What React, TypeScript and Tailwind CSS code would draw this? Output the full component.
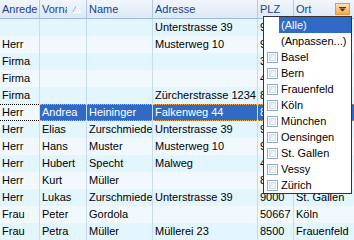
import React from 'react';

// column widths include the 1px right grid line
const columns = [
  { label: 'Anrede', width: 'w-[40px]' },
  { label: 'Vorname', width: 'w-[47px]' },
  { label: 'Name', width: 'w-[66px]' },
  { label: 'Adresse', width: 'w-[105px]' },
  { label: 'PLZ', width: 'w-[36px]' },
  { label: 'Ort', width: 'w-[60px]' },
];

const rows: string[][] = [
  ['', '', '', 'Unterstrasse 39', '9000', 'St. Gallen'],
  ['Herr', '', '', 'Musterweg 10', '9000', 'St. Gallen'],
  ['Firma', '', '', '', '3000', 'Bern'],
  ['Firma', '', '', '', '4500', 'Oensingen'],
  ['Firma', '', '', 'Zürcherstrasse 1234', '8000', 'Zürich'],
  ['Herr', 'Andrea', 'Heininger', 'Falkenweg 44', '8500', 'Frauenfeld'],
  ['Herr', 'Elias', 'Zurschmiede', 'Unterstrasse 39', '9000', 'St. Gallen'],
  ['Herr', 'Hans', 'Muster', 'Musterweg 10', '9000', 'St. Gallen'],
  ['Herr', 'Hubert', 'Specht', 'Malweg', '4500', 'Oensingen'],
  ['Herr', 'Kurt', 'Müller', '', '8000', 'Zürich'],
  ['Herr', 'Lukas', 'Zurschmiede', 'Unterstrasse 39', '9000', 'St. Gallen'],
  ['Frau', 'Peter', 'Gordola', '', '50667', 'Köln'],
  ['Frau', 'Petra', 'Müller', 'Müllerei 23', '8500', 'Frauenfeld'],
];

const SELECTED = 5;

const filterItems = [
  'Basel',
  'Bern',
  'Frauenfeld',
  'Köln',
  'München',
  'Oensingen',
  'St. Gallen',
  'Vessy',
  'Zürich',
];

function SortGlyph() {
  return (
    <svg width="9" height="8" viewBox="0 0 9 8" className="shrink-0">
      <line x1="4.5" y1="0.5" x2="0.5" y2="7.5" stroke="#a3adbd" strokeWidth="1" />
      <line x1="4.5" y1="0.5" x2="8.5" y2="7.5" stroke="#ffffff" strokeWidth="1" />
      <line x1="0.5" y1="7.5" x2="8.5" y2="7.5" stroke="#ffffff" strokeWidth="1" />
    </svg>
  );
}

function FilterButton() {
  return (
    <div className="w-[15px] h-[12px] shrink-0 border border-[#e59a45] bg-gradient-to-b from-[#ffe2b0] to-[#f9a94e] flex items-center justify-center">
      <svg width="7" height="5" viewBox="0 0 7 5">
        <rect x="0" y="0" width="7" height="1" fill="#4a3a2a" />
        <polygon points="0.5,1.5 6.5,1.5 3.5,4.5" fill="#333333" />
      </svg>
    </div>
  );
}

function Checkbox() {
  return (
    <div className="w-[11px] h-[11px] border border-[#8eaad0] bg-white p-[1px]">
      <div className="w-full h-full border border-[#d3e0f1] bg-gradient-to-br from-[#dbe6f4] to-white" />
    </div>
  );
}

export default function App() {
  return (
    <div
      className="relative w-[354px] h-[240px] overflow-hidden bg-white text-[11px] leading-none text-black"
      style={{ fontFamily: '"Liberation Sans", Arial, sans-serif' }}
    >
      {/* Header */}
      <div className="flex h-[19px] border-b border-[#9fbbe0] bg-gradient-to-b from-[#f2f6fc] to-[#dde8f6] text-[#15428b]">
        {columns.map((col, i) => (
          <div
            key={col.label}
            className={`${col.width} shrink-0 flex items-center pl-[2px] overflow-hidden ${
              i < columns.length - 1 ? 'border-r border-[#b4c9e6]' : ''
            }`}
          >
            {col.label === 'Vorname' ? (
              <>
                <div className="w-[25px] overflow-hidden whitespace-nowrap">{col.label}</div>
                <div className="ml-[5px]">
                  <SortGlyph />
                </div>
              </>
            ) : col.label === 'Ort' ? (
              <>
                <span className="flex-1">{col.label}</span>
                <div className="mr-[4px]">
                  <FilterButton />
                </div>
              </>
            ) : (
              <span className="whitespace-nowrap">{col.label}</span>
            )}
          </div>
        ))}
      </div>

      {/* Rows */}
      {rows.map((row, r) => {
        const bg = r % 2 === 0 ? 'bg-[#e3f5fd]' : 'bg-[#f2f9fe]';
        const selected = r === SELECTED;
        return (
          <div key={r} className={`flex h-[17px] ${bg}`}>
            {row.map((cell, c) => {
              const last = c === row.length - 1;
              const line = last ? '' : 'border-r border-[#c7dbf1]';
              if (selected) {
                const isBlue = c > 0;
                return (
                  <div
                    key={c}
                    className={`${columns[c].width} shrink-0 ${line} ${isBlue ? 'bg-[#316ac5] text-white' : ''}`}
                  >
                    <div
                      className={`h-full flex items-center pl-[2px] whitespace-nowrap overflow-hidden border-y border-dotted ${
                        isBlue ? 'border-[#f0a848]' : 'border-black'
                      }`}
                    >
                      {cell}
                    </div>
                  </div>
                );
              }
              return (
                <div
                  key={c}
                  className={`${columns[c].width} shrink-0 ${line} flex items-center pl-[2px] whitespace-nowrap overflow-hidden`}
                >
                  {cell}
                </div>
              );
            })}
          </div>
        );
      })}

      {/* Filter dropdown for Ort */}
      <div className="absolute left-[263px] top-[16px] w-[89px] border border-[#333333] bg-white flex flex-col">
        <div className="flex h-[16px]">
          <div className="w-[15px] shrink-0" />
          <div className="flex-1 bg-[#316ac5] text-white flex items-center pl-[2px]">(Alle)</div>
        </div>
        <div className="flex h-[16px]">
          <div className="w-[15px] shrink-0" />
          <div className="flex-1 flex items-center pl-[2px] whitespace-nowrap">(Anpassen...)</div>
        </div>
        {filterItems.map(item => (
          <div key={item} className="flex h-[16px] items-center">
            <div className="w-[15px] shrink-0 flex items-center pl-[3px]">
              <Checkbox />
            </div>
            <div className="flex-1 pl-[2px] whitespace-nowrap">{item}</div>
          </div>
        ))}
      </div>
    </div>
  );
}
